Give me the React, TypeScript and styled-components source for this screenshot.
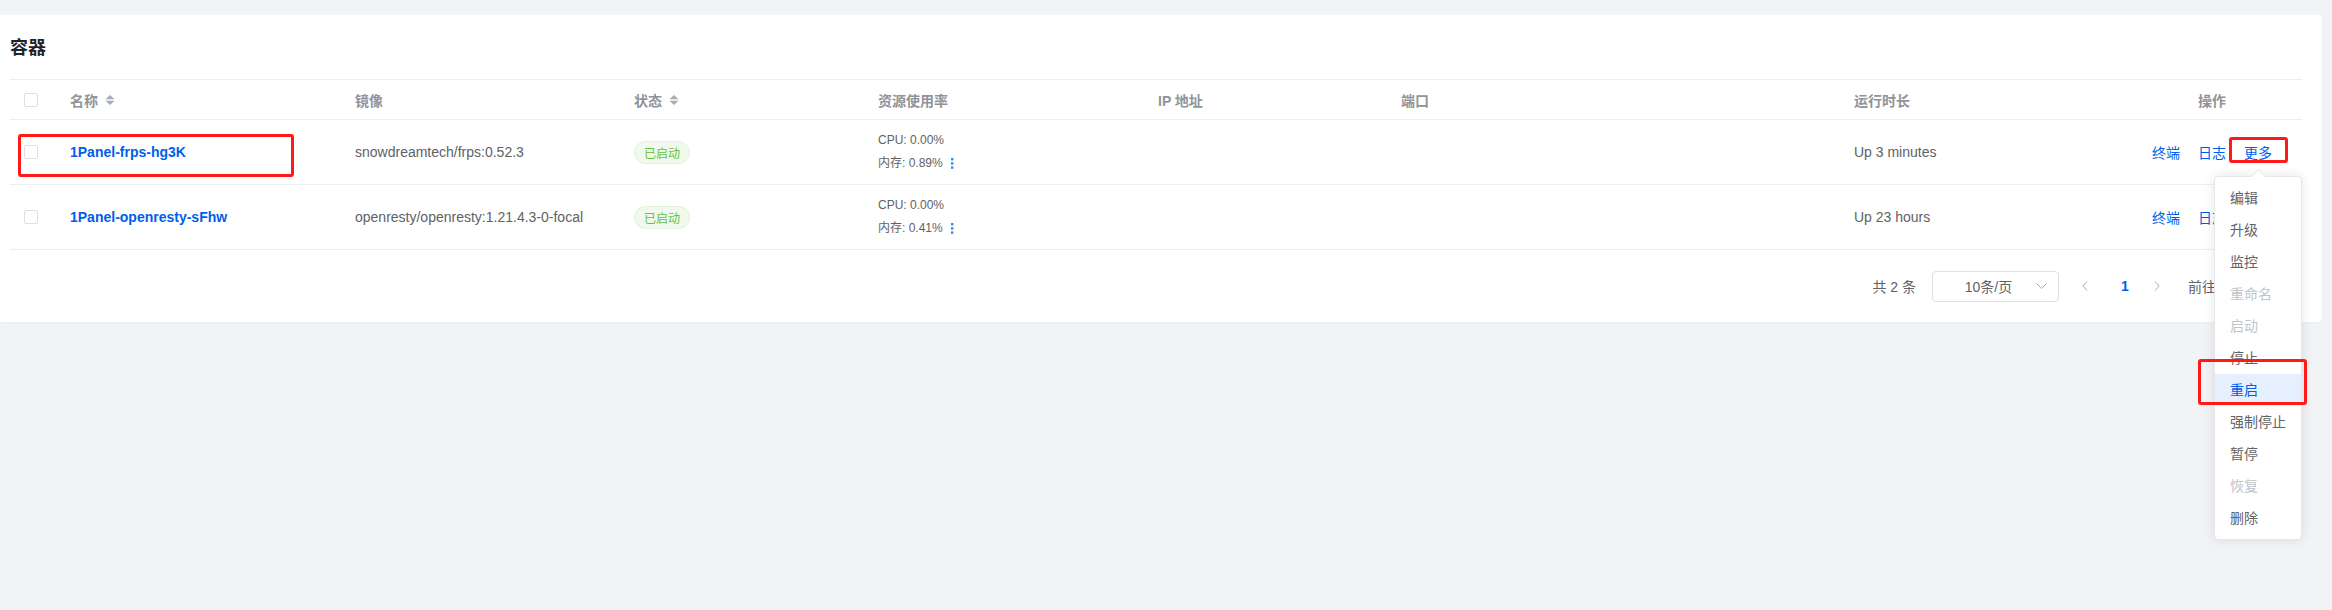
import styled, { createGlobalStyle } from "styled-components";

const GlobalStyle = createGlobalStyle`
  body {
    margin: 0;
    background: #f2f3f4;
    font-family: "Liberation Sans", "Noto Sans CJK SC", sans-serif;
  }
`;

const COLUMNS = "48px 285px 279px 244px 280px 243px 453px 280px 180px";

const Page = styled.div`
  position: relative;
  width: 2332px;
  height: 610px;
  padding-top: 15px;
  box-sizing: border-box;
`;

const Card = styled.div`
  margin-right: 10px;
  background: #fff;
  border-radius: 0 4px 4px 0;
  padding: 20px 20px 20px 10px;
  box-shadow: 0 1px 2px rgba(0, 0, 0, 0.03);
`;

const Title = styled.div`
  font-size: 18px;
  line-height: 26px;
  font-weight: 600;
  color: #1f2329;
  margin-bottom: 18px;
`;

const Table = styled.div`
  border-top: 1px solid #ebeef5;
`;

const Row = styled.div<{ $header?: boolean }>`
  display: grid;
  grid-template-columns: ${COLUMNS};
  height: ${({ $header }) => ($header ? "39px" : "64px")};
  border-bottom: 1px solid #ebeef5;
`;

const Cell = styled.div<{ $center?: boolean; $check?: boolean }>`
  display: flex;
  align-items: center;
  justify-content: ${({ $center }) => ($center ? "center" : "flex-start")};
  padding: ${({ $check }) => ($check ? "0 0 0 14px" : "0 12px")};
  font-size: 14px;
  color: #606266;
  white-space: nowrap;
  overflow: hidden;
`;

const HeadCell = styled(Cell)`
  color: #909399;
  font-weight: 600;
`;

const Checkbox = styled.span`
  width: 14px;
  height: 14px;
  box-sizing: border-box;
  border: 1px solid #dcdfe6;
  border-radius: 2px;
  background: #fff;
`;

const SortIcon = () => (
  <svg width="10" height="10" viewBox="0 0 10 10" style={{ marginLeft: 7 }}>
    <path d="M0.5 4.2 L5 0 L9.5 4.2 Z" fill="#a8abb2" />
    <path d="M0.5 5.8 L5 10 L9.5 5.8 Z" fill="#a8abb2" />
  </svg>
);

const NameLink = styled.span`
  color: #005eeb;
  font-weight: 700;
`;

const Tag = styled.span`
  display: inline-flex;
  align-items: center;
  height: 23px;
  box-sizing: border-box;
  padding: 0 9px;
  border: 1px solid #e1f3d8;
  background: #f0f9eb;
  color: #67c23a;
  border-radius: 12px;
  font-size: 12px;
`;

const Usage = styled.div`
  display: flex;
  flex-direction: column;
  font-size: 12px;
  line-height: 23px;
  color: #606266;
`;

const UsageLine = styled.div`
  display: flex;
  align-items: center;
`;

const DotsIcon = () => (
  <svg width="3" height="11" viewBox="0 0 3 11" style={{ marginLeft: 8 }}>
    <rect x="0" y="0" width="2.4" height="2.4" fill="#2b8ff0" />
    <rect x="0" y="4.2" width="2.4" height="2.4" fill="#2b8ff0" />
    <rect x="0" y="8.4" width="2.4" height="2.4" fill="#2b8ff0" />
  </svg>
);

const Ops = styled.div`
  display: flex;
  gap: 18px;
`;

const LinkButton = styled.span`
  color: #005eeb;
  font-size: 14px;
`;

const Pagination = styled.div`
  display: flex;
  justify-content: flex-end;
  align-items: center;
  margin-top: 20px;
  height: 32px;
  font-size: 14px;
  color: #606266;
`;

const Total = styled.span`
  margin-right: 16px;
`;

const Select = styled.div`
  display: flex;
  align-items: center;
  width: 127px;
  height: 31px;
  box-sizing: border-box;
  border: 1px solid #dcdfe6;
  border-radius: 4px;
  padding: 0 11px 0 8px;
  margin-right: 10px;
`;

const SelectValue = styled.span`
  flex: 1;
  text-align: center;
`;

const PageButton = styled.span<{ $active?: boolean }>`
  display: inline-flex;
  align-items: center;
  justify-content: center;
  width: 32px;
  height: 32px;
  color: ${({ $active }) => ($active ? "#005eeb" : "#a8abb2")};
  font-weight: ${({ $active }) => ($active ? 700 : 400)};
`;

const PrevButton = styled(PageButton)`
  margin-right: 8px;
`;

const Jumper = styled.span`
  display: inline-flex;
  align-items: center;
  gap: 8px;
  margin-left: 15px;
`;

const JumperInput = styled.span`
  width: 56px;
  height: 32px;
  box-sizing: border-box;
  border: 1px solid #dcdfe6;
  border-radius: 4px;
`;

const Menu = styled.div`
  position: absolute;
  left: 2214px;
  top: 176px;
  width: 88px;
  box-sizing: border-box;
  background: #fff;
  border: 1px solid #e4e7ed;
  border-radius: 4px;
  box-shadow: 0 0 12px rgba(0, 0, 0, 0.1);
  padding: 5px 0;
`;

const MenuArrow = styled.span`
  position: absolute;
  left: 38px;
  top: -6px;
  width: 10px;
  height: 10px;
  background: #fff;
  border-left: 1px solid #e4e7ed;
  border-top: 1px solid #e4e7ed;
  transform: rotate(45deg);
`;

const MenuItem = styled.div<{ $disabled?: boolean; $active?: boolean }>`
  padding: 5px 0 5px 15px;
  font-size: 14px;
  line-height: 22px;
  white-space: nowrap;
  color: ${({ $disabled, $active }) =>
    $active ? "#005eeb" : $disabled ? "#c0c4cc" : "#606266"};
  background: ${({ $active }) => ($active ? "#e6effd" : "transparent")};
`;

const Highlight = styled.div`
  position: absolute;
  box-sizing: border-box;
  border: 3px solid #ff1a1a;
  border-radius: 3px;
  pointer-events: none;
`;

const Chevron = ({ dir }: { dir: "left" | "right" | "down" }) => {
  if (dir === "down") {
    return (
      <svg width="11" height="6" viewBox="0 0 11 6">
        <polyline points="0.5,0.5 5.5,5.5 10.5,0.5" fill="none" stroke="#a8abb2" strokeWidth="1" />
      </svg>
    );
  }
  const points = dir === "left" ? "5,0.5 0.8,5 5,9.5" : "1,0.5 5.2,5 1,9.5";
  return (
    <svg width="6" height="10" viewBox="0 0 6 10">
      <polyline points={points} fill="none" stroke="#a8abb2" strokeWidth="1" />
    </svg>
  );
};

interface Container {
  name: string;
  image: string;
  cpu: string;
  memory: string;
  uptime: string;
}

const containers: Container[] = [
  {
    name: "1Panel-frps-hg3K",
    image: "snowdreamtech/frps:0.52.3",
    cpu: "0.00%",
    memory: "0.89%",
    uptime: "Up 3 minutes",
  },
  {
    name: "1Panel-openresty-sFhw",
    image: "openresty/openresty:1.21.4.3-0-focal",
    cpu: "0.00%",
    memory: "0.41%",
    uptime: "Up 23 hours",
  },
];

const menuItems = [
  { label: "编辑" },
  { label: "升级" },
  { label: "监控" },
  { label: "重命名", disabled: true },
  { label: "启动", disabled: true },
  { label: "停止" },
  { label: "重启", active: true },
  { label: "强制停止" },
  { label: "暂停" },
  { label: "恢复", disabled: true },
  { label: "删除" },
];

export default function App() {
  return (
    <>
      <GlobalStyle />
      <Page>
        <Card>
          <Title>容器</Title>
          <Table>
            <Row $header>
              <HeadCell $check>
                <Checkbox />
              </HeadCell>
              <HeadCell>
                名称
                <SortIcon />
              </HeadCell>
              <HeadCell>镜像</HeadCell>
              <HeadCell>
                状态
                <SortIcon />
              </HeadCell>
              <HeadCell>资源使用率</HeadCell>
              <HeadCell>IP 地址</HeadCell>
              <HeadCell>端口</HeadCell>
              <HeadCell>运行时长</HeadCell>
              <HeadCell $center>操作</HeadCell>
            </Row>
            {containers.map((c) => (
              <Row key={c.name}>
                <Cell $check>
                  <Checkbox />
                </Cell>
                <Cell>
                  <NameLink>{c.name}</NameLink>
                </Cell>
                <Cell>{c.image}</Cell>
                <Cell>
                  <Tag>已启动</Tag>
                </Cell>
                <Cell>
                  <Usage>
                    <UsageLine>CPU: {c.cpu}</UsageLine>
                    <UsageLine>
                      内存: {c.memory}
                      <DotsIcon />
                    </UsageLine>
                  </Usage>
                </Cell>
                <Cell />
                <Cell />
                <Cell>{c.uptime}</Cell>
                <Cell $center>
                  <Ops>
                    <LinkButton>终端</LinkButton>
                    <LinkButton>日志</LinkButton>
                    <LinkButton>更多</LinkButton>
                  </Ops>
                </Cell>
              </Row>
            ))}
          </Table>
          <Pagination>
            <Total>共 2 条</Total>
            <Select>
              <SelectValue>10条/页</SelectValue>
              <Chevron dir="down" />
            </Select>
            <PrevButton>
              <Chevron dir="left" />
            </PrevButton>
            <PageButton $active>1</PageButton>
            <PageButton>
              <Chevron dir="right" />
            </PageButton>
            <Jumper>
              前往
              <JumperInput />
              页
            </Jumper>
          </Pagination>
        </Card>

        <Menu>
          <MenuArrow />
          {menuItems.map((item) => (
            <MenuItem key={item.label} $disabled={item.disabled} $active={item.active}>
              {item.label}
            </MenuItem>
          ))}
        </Menu>

        <Highlight style={{ left: 18, top: 134, width: 276, height: 43 }} />
        <Highlight style={{ left: 2229, top: 137, width: 59, height: 26 }} />
        <Highlight style={{ left: 2198, top: 359, width: 109, height: 46 }} />
      </Page>
    </>
  );
}
